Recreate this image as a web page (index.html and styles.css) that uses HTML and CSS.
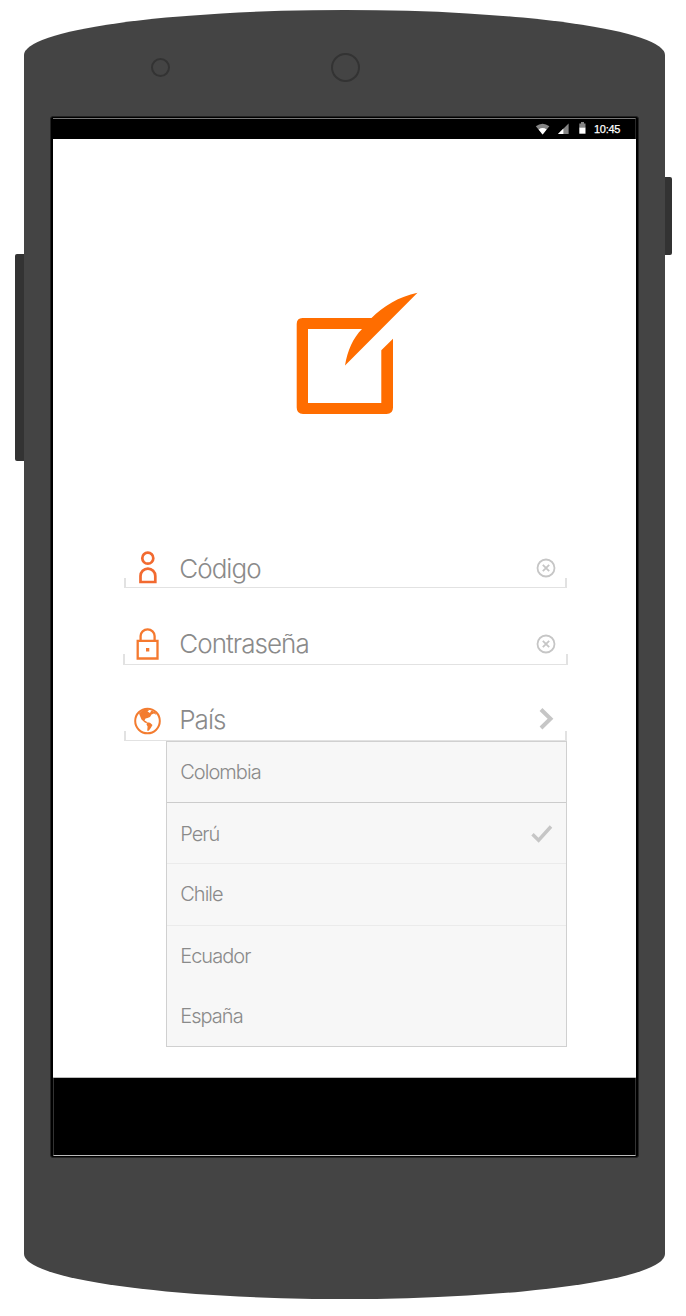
FILE: index.html
```
<!DOCTYPE html>
<html lang="es">
<head>
<meta charset="utf-8">
<title>Acceso</title>
<link rel="stylesheet" href="styles.css">
</head>
<body>
<div class="phone">
  <span class="side-button side-button-left"></span>
  <span class="side-button side-button-right"></span>
  <div class="shell">
    <div class="sensors"><span class="camera"></span><span class="speaker"></span></div>
    <div class="frame">
      <header class="status-bar">
        <svg class="wifi" width="16" height="12" viewBox="0 0 16 12"><path d="M.8 3.2Q7.5-1.8 14.4 3.2L7.6 11.4Z" fill="#858585"/><path d="M3.6 6.4Q7.6 3.600 11.6 6.4L7.6 11.4Z" fill="#fff"/></svg>
        <svg class="signal" width="11" height="11" viewBox="0 0 11 11"><path d="M0 11 10.6.4V11Z" fill="#858585"/><path d="M0 11 5.4 5.6V11Z" fill="#fff"/></svg>
        <svg class="battery" width="7" height="12" viewBox="0 0 7 12"><path d="M2 0h3v1.500h1.500V6H.3V1.500H2Z" fill="#858585"/><path d="M.3 5.700h6.200v6H.3Z" fill="#fff"/></svg>
        <span class="clock">10:45</span>
      </header>
      <main class="screen">
        <svg class="logo" width="122" height="122" viewBox="296 292 122 122"><path fill="#ff6d00" d="M302.500 318H371.500C383 306.500 399 296.500 417.500 292.800L345 365.400C347.500 350.500 353 338 362 329H308V403H381.300V350.200L393 338.800V407.500Q393 414 386.500 414H303Q296.700 414 296.700 407.500V324Q296.700 318 302.500 318Z"/></svg>
        <form class="login">
          <div class="field">
            <svg class="field-icon" width="28" height="34" viewBox="134 549.500 28 34"><g fill="none" stroke="#f26a30" stroke-width="2.700"><circle cx="147.800" cy="557.700" r="5.500"/><path d="M140.500 581.500V575.500A7.400 7.400 0 0 1 155.300 575.500V581.500Z"/></g></svg>
            <span class="label label-code">Código</span>
            <svg class="clear clear-code" width="20" height="20" viewBox="0 0 20 20"><circle cx="10" cy="10" r="8.500"/><path d="M6.800 6.800 13.200 13.200M13.200 6.800 6.800 13.200"/></svg>
          </div>
          <div class="field field-wide">
            <svg class="field-icon" width="28" height="34" viewBox="134 626.500 28 34"><g fill="none" stroke="#f5792f" stroke-width="2.300"><path d="M137.700 640.400H157.500V658H137.700Z"/><path d="M140.600 640V635.500A7 6.600 0 0 1 154.600 635.500V640"/></g><path fill="#f5792f" d="M146 647.500h3.300v3.500H146Z"/></svg>
            <span class="label">Contraseña</span>
            <svg class="clear" width="20" height="20" viewBox="0 0 20 20"><circle cx="10" cy="10" r="8.500"/><path d="M6.800 6.800 13.200 13.200M13.200 6.800 6.800 13.200"/></svg>
          </div>
          <div class="field">
            <svg class="field-icon" width="28" height="34" viewBox="134 703 28 34"><circle cx="147.500" cy="721" r="12.300" fill="none" stroke="#f37c30" stroke-width="2"/><path fill="#f37c30" d="M139 713.500 142 710.500 147 708.800 149 710.200 147.500 711.500 150 713 151.300 710.500 155 712 156.500 715 154 713.500 151.500 714.500 150 717 147.500 718 145.500 718.500 144.500 720.500 146.500 721.500 147.300 723.500 144.800 722.500 141.500 719.500Z"/><path fill="#f37c30" d="M147.300 722.300 150 722.800 152.500 725 150.800 728 148.700 730.800H147.200L147.600 726.500 146.500 724.500Z"/></svg>
            <span class="label">País</span>
            <svg class="chevron" width="16" height="22" viewBox="0 0 16 22"><path d="M2 1.500 11.500 10.800 2 20"/></svg>
          </div>
          <ul class="options">
            <li class="option option-first"><span>Colombia</span></li>
            <li class="option option-ruled option-selected"><span>Perú</span><svg class="check" width="22" height="18" viewBox="0 0 22 18"><path d="M1.500 9.300 7.600 15.200 20 1.500"/></svg></li>
            <li class="option option-ruled option-tall"><span>Chile</span></li>
            <li class="option option-short"><span>Ecuador</span></li>
            <li class="option option-short"><span>España</span></li>
          </ul>
        </form>
      </main>
      <footer class="nav-bar"></footer>
    </div>
  </div>
</div>
</body>
</html>
```
FILE: styles.css
```
* { box-sizing: border-box; }
body { margin: 0; background: #fff; font-family: Inter, "Liberation Sans", sans-serif; font-weight: 300; }
svg { display: block; flex: none; }
.phone { position: relative; width: 686px; height: 1316px; padding: 10px 0 0 24px; }
.side-button { position: absolute; background: #333; }
.side-button-left { left: 15px; top: 254px; width: 12px; height: 207px; border-radius: 2px 0 0 2px; }
.side-button-right { left: 660px; top: 177px; width: 12px; height: 78px; border-radius: 0 2px 2px 0; }
.shell { position: relative; width: 640.5px; height: 1288.5px; padding-left: 26px; background: #444; border-radius: 320px / 45px; }
.sensors { display: flex; align-items: center; height: 106px; padding: 8px 0 0 101px; }
.camera { width: 19px; height: 19px; border: 2px solid #333; border-radius: 50%; }
.speaker { width: 29px; height: 29px; margin-left: 161px; border: 2px solid #333; border-radius: 50%; }
.frame { width: 589px; height: 1042px; padding: 1px 2px; background: #000; border: 1px solid #222; border-radius: 3px; }
.status-bar { display: flex; align-items: flex-start; height: 21px; padding: 4px 0 0 482px; border: solid #2a2a2a; border-width: 1px 1px 0 0; border-top-color: #777; color: #fff; }
.signal { margin-left: 6.5px; }
.battery { margin: -1px 0 0 10px; }
.clock { margin-left: 8.5px; font: 500 11px/12px "Liberation Sans", sans-serif; letter-spacing: -.3px; -webkit-text-stroke: .25px #fff; }
.screen { height: 939px; padding: 153px 0 0 70px; background: #fff; border-bottom: 1px solid #bbb; }
.logo { margin-left: 173px; }
.login { width: 445px; margin-top: 125px; }
.field { position: relative; display: flex; align-items: center; width: 443px; height: 49px; margin: 0 0 28px 1px; padding: 6px 11px 0 10px; }
.field::after { content: ""; position: absolute; left: 0; right: 0; bottom: 0; height: 9px; border: solid #e2e2e2; border-width: 0 2px 1px; }
.field-wide { width: 445px; margin-left: 0; margin-bottom: 27px; padding-left: 11px; padding-right: 12px; }
.field-wide::after { height: 10px; }
.label { width: 340px; margin-left: 17.2px; font-size: 26px; line-height: 32px; letter-spacing: -.95px; color: #8a8a8a; white-space: nowrap; }
.label-code { padding-top: 5px; }
.clear { margin: 0 0 0 auto; fill: none; stroke: #c6c6c6; stroke-width: 1.8; }
.clear-code { margin-top: 2px; }
.chevron { margin: -2px 1px 0 auto; fill: none; stroke: #c6c6c6; stroke-width: 4; }
.options { width: 401px; height: 306px; margin: -28px 0 0 43px; padding: 0; list-style: none; background: #f7f7f7; border: 1px solid #d0d0d0; }
.option { display: flex; align-items: center; height: 61px; padding: 0 13px 0 13.2px; font-size: 20px; letter-spacing: -.95px; color: #8a8a8a; }
.option-first { border-bottom: 1px solid #ccc; }
.option-ruled { border-bottom: 1px solid #ebebeb; }
.option-selected { padding-top: 2px; }
.option-tall { height: 62px; padding-bottom: 1px; }
.option-short { height: 60px; }
.check { margin-left: auto; fill: none; stroke: #c6c6c6; stroke-width: 3.4; }
.nav-bar { height: 78px; border: 1px solid #333; border-top: 0; border-bottom-color: #bbb; }
```
